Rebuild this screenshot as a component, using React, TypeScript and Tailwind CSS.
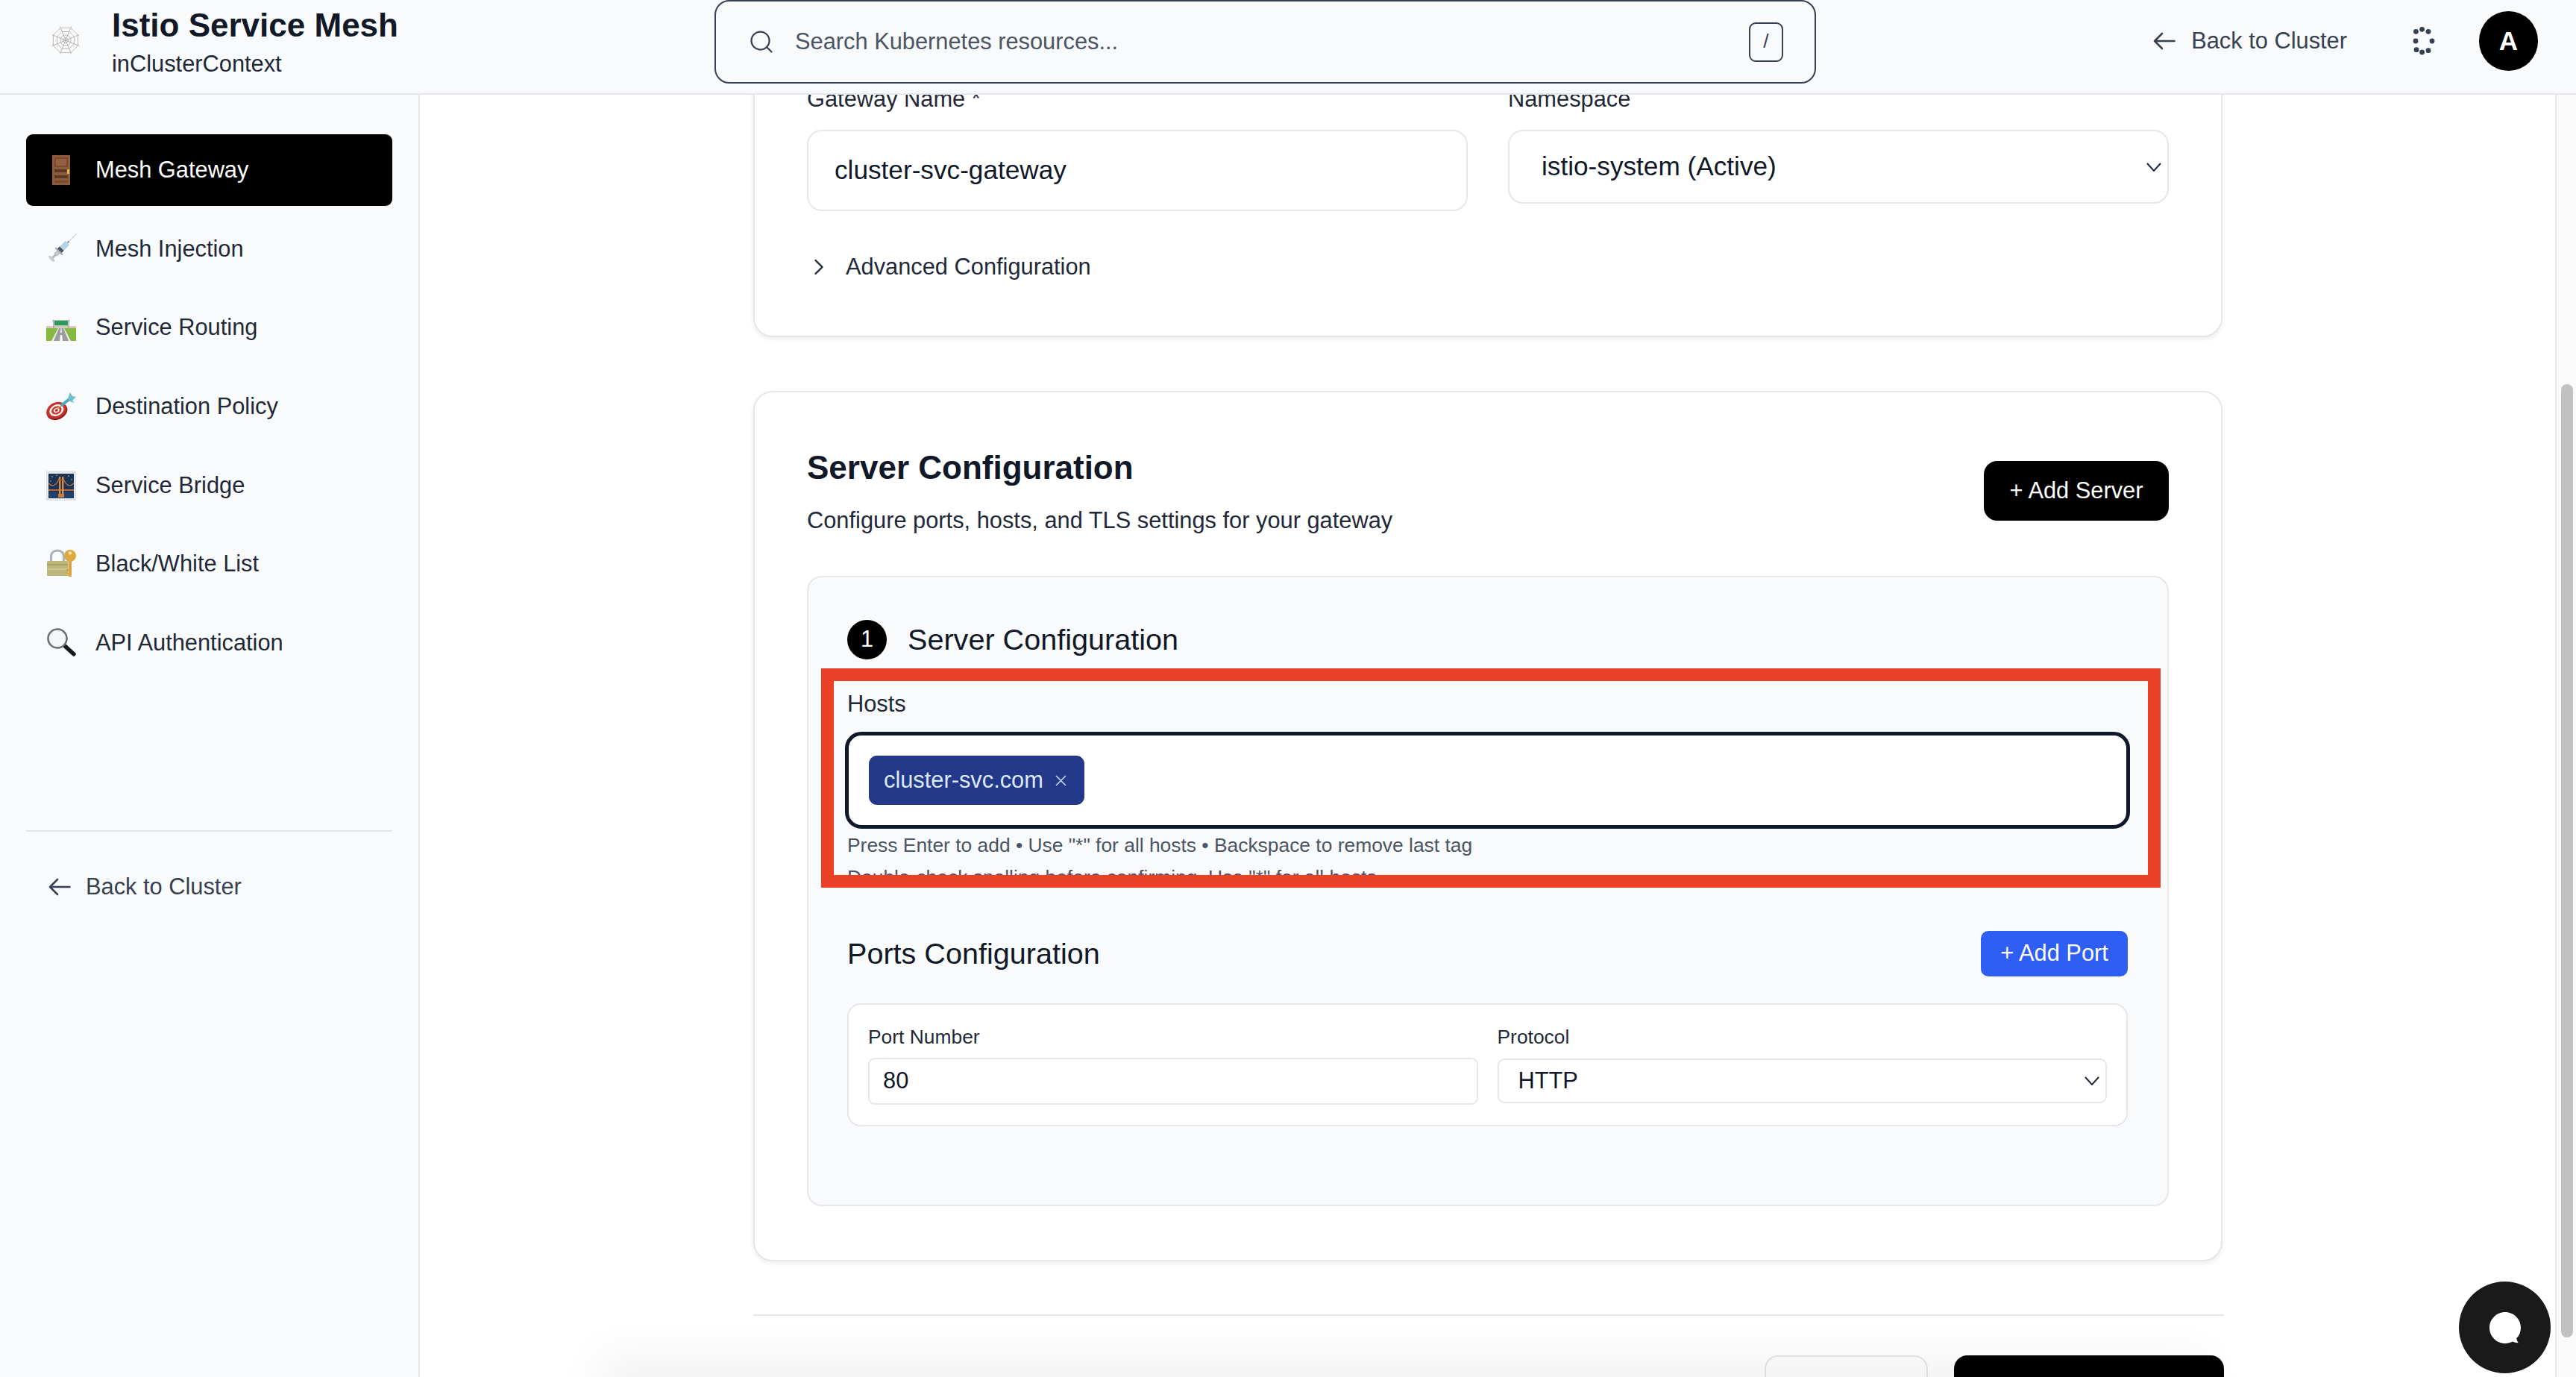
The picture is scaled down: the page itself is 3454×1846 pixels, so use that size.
import { ChevronRight, Search } from "lucide-react";

const Chevron = () => (
  <svg width="20" height="12" viewBox="0 0 20 12" fill="none" stroke="#1f2937" strokeWidth="2" className="shrink-0">
    <path d="M1 1l9 10 9-10" />
  </svg>
);

const BackArrow = () => (
  <svg width="30" height="24" viewBox="0 0 30 24" fill="none" stroke="#374151" strokeWidth="2.6" strokeLinecap="round" strokeLinejoin="round" className="shrink-0">
    <path d="M28.5 12H2M12 2 2 12l10 10" />
  </svg>
);

const WebLogo = () => {
  const spokes = [0, 45, 90, 135, 180, 225, 270, 315];
  const ring = (r: number) =>
    spokes
      .map((a, i) => {
        const rad = ((a + 22.5) * Math.PI) / 180;
        return `${i === 0 ? "M" : "L"}${(20 + Math.cos(rad) * r).toFixed(1)} ${(20 + Math.sin(rad) * r).toFixed(1)}`;
      })
      .join(" ") + "Z";
  return (
    <svg width="40" height="40" viewBox="0 0 40 40" fill="none" stroke="#b0b0b0" strokeWidth="0.9" className="shrink-0">
      {spokes.map((a) => {
        const rad = ((a + 22.5) * Math.PI) / 180;
        return <line key={a} x1="20" y1="20" x2={20 + Math.cos(rad) * 20} y2={20 + Math.sin(rad) * 20} />;
      })}
      <path d={ring(18)} />
      <path d={ring(12.5)} />
      <path d={ring(7.5)} />
      <path d={ring(3.5)} />
    </svg>
  );
};

const DoorIcon = () => (
  <svg width="40" height="40" viewBox="0 0 40 40">
    <rect x="8" y="0" width="24" height="40" fill="#8c5a3c" />
    <rect x="11" y="3" width="18" height="13" fill="#7a4a2e" />
    <rect x="13" y="5" width="14" height="9" fill="#93603f" />
    <rect x="11" y="19" width="18" height="4" fill="#5f3a22" />
    <rect x="11" y="27" width="18" height="4" fill="#5f3a22" />
    <rect x="11" y="34" width="18" height="3" fill="#7a4a2e" />
    <rect x="28" y="19" width="3" height="6" fill="#e5b84a" />
  </svg>
);

const SyringeIcon = () => (
  <svg width="40" height="40" viewBox="0 0 40 40">
    <g transform="rotate(45 20 20)">
      <rect x="19.6" y="-8" width="0.8" height="15" fill="#b4bcc4" />
      <rect x="18.6" y="5" width="2.8" height="3" fill="#9ca3af" />
      <rect x="16" y="8" width="8" height="15" rx="1" fill="#b7d3e6" />
      <rect x="16" y="19" width="8" height="5" fill="#4b5563" />
      <rect x="17" y="24" width="6" height="7" fill="#c3c8cd" />
      <rect x="13" y="23" width="14" height="2.4" rx="1" fill="#a8aeb4" />
      <rect x="18.5" y="30" width="3" height="8" fill="#b4b9bf" />
      <ellipse cx="20" cy="38" rx="5.5" ry="2.2" fill="#c9cdd2" />
    </g>
  </svg>
);

const RoadIcon = () => (
  <svg width="40" height="40" viewBox="0 0 40 40">
    <rect x="0" y="18" width="40" height="4" fill="#d6cab8" />
    <rect x="0" y="21" width="40" height="17" fill="#86b93f" />
    <polygon points="17,21 23,21 32,38 8,38" fill="#9a9c9e" />
    <polygon points="19.600,21 20.400,21 21,27 19,27" fill="#f3f4f6" />
    <polygon points="16,21 17,21 10,38 7,38" fill="#eceef0" />
    <polygon points="23,21 24,21 33,38 30,38" fill="#eceef0" />
    <polygon points="18.800,30 21.200,30 22,38 18,38" fill="#f3f4f6" />
    <rect x="9" y="10" width="1.600" height="12" fill="#a8adb2" />
    <rect x="29.400" y="10" width="1.600" height="12" fill="#a8adb2" />
    <rect x="8" y="10" width="24" height="1.400" fill="#b4b9be" />
    <rect x="11" y="11" width="18" height="6.500" fill="#2f9a5b" />
  </svg>
);

const DartIcon = () => (
  <svg width="40" height="40" viewBox="0 0 40 40">
    <g transform="rotate(-25 14 25.500)">
      <ellipse cx="14" cy="26.500" rx="14.500" ry="11" fill="#8f1d1d" />
      <ellipse cx="14" cy="25" rx="14" ry="10.500" fill="#c8312b" />
      <ellipse cx="14" cy="25" rx="10" ry="7.500" fill="#f3f1ee" />
      <ellipse cx="14" cy="25" rx="7" ry="5.200" fill="#c8312b" />
      <ellipse cx="14" cy="25" rx="4.200" ry="3.100" fill="#f3f1ee" />
      <ellipse cx="14" cy="25" rx="2.200" ry="1.700" fill="#c8312b" />
    </g>
    <line x1="15" y1="23" x2="22" y2="17" stroke="#c9a24b" strokeWidth="1.600" />
    <line x1="21" y1="18" x2="31" y2="10" stroke="#4fa9b8" strokeWidth="4" strokeLinecap="round" />
    <polygon points="29,9 32,1 35,6 40,7 35,12 38,15 31,13" fill="#6cc0c9" />
  </svg>
);

const BridgeIcon = () => (
  <svg width="40" height="40" viewBox="0 -3 40 40">
    <rect x="0" y="-2" width="40" height="39" fill="#e5e9ed" stroke="#cfd4d9" strokeWidth="0.8" />
    <rect x="3" y="1" width="34" height="33" fill="#1c3358" />
    <rect x="3" y="26" width="34" height="8" fill="#22406e" />
    <rect x="3" y="22" width="34" height="2" fill="#c0692f" />
    <path d="M3 14 Q 12 22 18 6 M22 6 Q 28 22 37 14" fill="none" stroke="#c97b3a" strokeWidth="1.100" />
    <rect x="17" y="5" width="2.400" height="27" fill="#d98a45" />
    <rect x="21" y="5" width="2.400" height="27" fill="#d98a45" />
    <rect x="17" y="9" width="6" height="1.600" fill="#a85c2a" />
    <rect x="16" y="28" width="8" height="5" fill="#c97b3a" />
    <circle cx="8" cy="5" r="0.8" fill="#f2dc9c" />
    <circle cx="14" cy="3" r="0.7" fill="#f2dc9c" />
    <circle cx="30" cy="4" r="0.8" fill="#f2dc9c" />
    <circle cx="34" cy="9" r="0.7" fill="#f2dc9c" />
    <circle cx="6" cy="11" r="0.7" fill="#f2dc9c" />
  </svg>
);

const LockIcon = () => (
  <svg width="40" height="40" viewBox="0 0 40 40">
    <path d="M6.500 17V10.500C6.500 5 10 2 15 2s8.500 3 8.500 8.500V17" fill="none" stroke="#aab4bd" strokeWidth="3.200" />
    <rect x="1" y="16" width="28" height="20" rx="1.500" fill="#bdb67a" />
    <rect x="1" y="20" width="28" height="2" fill="#a8a164" />
    <rect x="1" y="26" width="28" height="2" fill="#cdc78f" />
    <rect x="29.500" y="13" width="4.500" height="24" fill="#d9a544" />
    <rect x="27" y="27" width="3" height="2.500" fill="#d9a544" />
    <rect x="27" y="32" width="3" height="2.500" fill="#d9a544" />
    <circle cx="32" cy="9" r="8" fill="#dfa941" />
    <circle cx="32" cy="5.500" r="2.200" fill="#f6e3b0" />
  </svg>
);

const MagnifierIcon = () => (
  <svg width="40" height="40" viewBox="0 0 40 40">
    <line x1="25" y1="24" x2="37" y2="35" stroke="#16181b" strokeWidth="5.500" strokeLinecap="round" />
    <circle cx="15" cy="14" r="12.500" fill="#f5f6f7" stroke="#6b7077" strokeWidth="2.600" />
  </svg>
);

const navItems = [
  { label: "Mesh Gateway", icon: <DoorIcon />, active: true },
  { label: "Mesh Injection", icon: <SyringeIcon /> },
  { label: "Service Routing", icon: <RoadIcon /> },
  { label: "Destination Policy", icon: <DartIcon /> },
  { label: "Service Bridge", icon: <BridgeIcon /> },
  { label: "Black/White List", icon: <LockIcon /> },
  { label: "API Authentication", icon: <MagnifierIcon /> },
];

const dots = [
  [-10.6, -12.7],
  [-2.4, -15.7],
  [6, -12.7],
  [-11, 0],
  [11, 0],
  [-10, 11.7],
  [-2.4, 15],
  [6, 12.7],
];

export default function App() {
  return (
    <div className="relative flex h-[1846px] w-[3454px] flex-col overflow-hidden bg-white font-['Liberation_Sans',Arial,sans-serif] text-[#111827]">
      {/* Top bar */}
      <header className="relative z-10 flex h-[127px] shrink-0 items-start border-b-2 border-[#e5e7eb] bg-[#f9fafb]">
        <div className="flex w-[958px] shrink-0 items-start pl-[68px]">
          <div className="mt-[34px]">
            <WebLogo />
          </div>
          <div className="ml-[42px] mt-[6px] flex flex-col">
            <span className="text-[44px] font-bold leading-[56px]">Istio Service Mesh</span>
            <span className="mt-[2px] text-[30.8px] leading-[44px] text-[#1f2937]">inClusterContext</span>
          </div>
        </div>
        <div className="flex h-[112px] w-[1477px] shrink-0 items-center rounded-[20px] border-2 border-[#374151] pl-[43px] pr-[42px]">
          <Search size={36} strokeWidth={1.5} color="#374151" className="shrink-0" />
          <span className="ml-[27px] flex-1 text-[30.8px] text-[#4b5563]">Search Kubernetes resources...</span>
          <span className="flex h-[53px] w-[46px] items-center justify-center rounded-[9px] border-2 border-[#374151] text-[26.4px] text-[#374151]">
            /
          </span>
        </div>
        <div className="flex h-[110px] flex-1 items-center justify-end pr-[51px]">
          <BackArrow />
          <span className="ml-[21px] text-[30.8px] text-[#374151]">Back to Cluster</span>
          <svg width="34" height="40" viewBox="-17 -20 34 40" fill="#374151" className="ml-[86px] shrink-0">
            {dots.map(([x, y], i) => (
              <circle key={i} cx={x} cy={y} r="3.4" />
            ))}
          </svg>
          <div className="ml-[57px] flex h-[80px] w-[79px] items-center justify-center rounded-full bg-black text-[35px] font-bold text-white">
            A
          </div>
        </div>
      </header>

      <div className="flex min-h-0 flex-1">
        {/* Sidebar */}
        <aside className="flex w-[563px] shrink-0 flex-col border-r-2 border-[#e5e7eb] bg-[#f9fafb] px-[35px] pt-[53px]">
          <nav className="flex flex-col gap-[9.7px]">
            {navItems.map((item) => (
              <div
                key={item.label}
                className={
                  item.active
                    ? "flex h-[96px] items-center gap-[26px] rounded-[9px] bg-black pl-[27px] text-[30.8px] text-white"
                    : "flex h-[96px] items-center gap-[26px] rounded-[9px] pl-[27px] text-[30.8px] text-[#1f2937]"
                }
              >
                {item.icon}
                <span>{item.label}</span>
              </div>
            ))}
          </nav>
          <div className="mt-[203px] border-t-2 border-[#e5e7eb]" />
          <div className="mt-[52px] flex h-[44px] items-center gap-[20px] pl-[30px] text-[30.8px] text-[#374151]">
            <BackArrow />
            <span>Back to Cluster</span>
          </div>
        </aside>

        {/* Main */}
        <main className="relative min-w-0 flex-1 overflow-hidden pl-[447px]">
          <div className="w-[1972px]">
            <section className="mt-[-88px] w-[1970px] rounded-[26px] border-2 border-[#e5e7eb] bg-white p-[70px] shadow-[0_3px_6px_rgba(0,0,0,0.07)]">
              <div className="grid grid-cols-2 items-start gap-[54px]">
                <div>
                  <div className="mb-[19px] text-[30.8px] leading-[44px] text-[#1f2937]">Gateway Name *</div>
                  <div className="flex h-[109px] items-center rounded-[20px] border-2 border-[#e5e7eb] pl-[35px] text-[35.2px]">
                    cluster-svc-gateway
                  </div>
                </div>
                <div>
                  <div className="mb-[19px] text-[30.8px] leading-[44px] text-[#1f2937]">Namespace</div>
                  <div className="flex h-[99px] items-center justify-between rounded-[20px] border-2 border-[#e5e7eb] pl-[43px] pr-[8px] text-[35.2px]">
                    <span>istio-system (Active)</span>
                    <Chevron />
                  </div>
                </div>
              </div>
              <div className="mt-[53px] flex h-[44px] items-center text-[30.8px] text-[#1f2937]">
                <ChevronRight size={36} strokeWidth={1.6} className="ml-[-2px] shrink-0" />
                <span className="ml-[18px]">Advanced Configuration</span>
              </div>
            </section>

            <section className="mt-[72px] w-[1970px] rounded-[26px] border-2 border-[#e5e7eb] bg-white px-[70px] pb-[72px] pt-[70px] shadow-[0_3px_6px_rgba(0,0,0,0.07)]">
              <div className="flex items-center justify-between">
                <div>
                  <h2 className="text-[44px] font-bold leading-[62px]">Server Configuration</h2>
                  <p className="mt-[18px] text-[30.8px] leading-[44px] text-[#1f2937]">
                    Configure ports, hosts, and TLS settings for your gateway
                  </p>
                </div>
                <button className="h-[80px] w-[248px] rounded-[18px] bg-black text-[30.8px] text-white">+ Add Server</button>
              </div>

              <div className="relative mt-[52px] h-[845px] rounded-[20px] border-2 border-[#e5e7eb] bg-[#f9fafb] pl-[52px] pr-[53px] pt-[57px]">
                <div className="flex items-center gap-[28px]">
                  <span className="flex h-[53px] w-[53px] items-center justify-center rounded-full bg-black text-[30.8px] text-white">
                    1
                  </span>
                  <h3 className="text-[39.6px] leading-[53px]">Server Configuration</h3>
                </div>

                <div className="mt-[38px] text-[30.8px] leading-[44px] text-[#1f2937]">Hosts</div>
                <div className="mx-[-3px] mt-[15px] flex h-[130px] items-center rounded-[22px] border-[5px] border-[#0f172a] bg-white pl-[27px]">
                  <span className="flex h-[66px] items-center gap-[16px] rounded-[11px] bg-[#24388a] pl-[20px] pr-[24px] text-[30.8px] text-[#dbeafe]">
                    cluster-svc.com
                    <svg width="15" height="15" viewBox="0 0 15 15" fill="none" stroke="#bfdbfe" strokeWidth="1.6">
                      <path d="M1 1l13 13M14 1 1 14" />
                    </svg>
                  </span>
                </div>
                <p className="mt-[5px] text-[26.4px] leading-[35px] text-[#4b5563]">
                  Press Enter to add • Use "*" for all hosts • Backspace to remove last tag
                </p>
                <p className="mt-[8px] text-[26.4px] leading-[35px] text-[#4b5563]">
                  Double-check spelling before confirming. Use "*" for all hosts
                </p>

                <div className="mt-[54px] flex h-[61px] items-center justify-between">
                  <h3 className="text-[39.6px]">Ports Configuration</h3>
                  <button className="h-[61px] w-[197px] rounded-[10px] bg-[#2f5ef5] text-[30.8px] text-white">+ Add Port</button>
                </div>

                <div className="mt-[36px] grid h-[165px] grid-cols-2 gap-[26px] rounded-[18px] border-2 border-[#e5e7eb] bg-white pl-[26px] pr-[26px] pt-[26px]">
                  <div>
                    <div className="mb-[10px] text-[26.4px] leading-[35px] text-[#1f2937]">Port Number</div>
                    <div className="flex h-[63px] items-center rounded-[9px] border-2 border-[#e5e7eb] pl-[18px] text-[30.8px]">80</div>
                  </div>
                  <div>
                    <div className="mb-[11px] text-[26.4px] leading-[35px] text-[#1f2937]">Protocol</div>
                    <div className="flex h-[60px] items-center justify-between rounded-[9px] border-2 border-[#e5e7eb] pl-[26px] pr-[8px] text-[30.8px]">
                      <span>HTTP</span>
                      <Chevron />
                    </div>
                  </div>
                </div>

                {/* Annotation drawn over the hosts field */}
                <div className="absolute left-[17px] top-[122px] h-[294px] w-[1796px] border-[17px] border-[#ea4026]" />
              </div>
            </section>

            <div className="mt-[71px] border-t-2 border-[#e5e7eb]" />
            <div className="mt-[53px] flex justify-end gap-[35px]">
              <button className="h-[96px] w-[219px] rounded-[18px] border-2 border-[#e5e7eb] bg-white" />
              <button className="h-[96px] w-[362px] rounded-[18px] bg-black" />
            </div>
          </div>

          <div className="absolute left-[270px] right-[500px] top-full h-[40px] shadow-[0_0_60px_30px_rgba(0,0,0,0.05)]" />
        </main>

        {/* Scrollbar */}
        <div className="w-[28px] shrink-0 border-l-2 border-[#e5e7eb] bg-[#fafafa] pl-[6px] pt-[388px]">
          <div className="h-[1278px] w-[16px] rounded-full bg-[#c1c1c1]" />
        </div>
      </div>

      {/* Chat launcher */}
      <div className="absolute bottom-[5px] right-[34px] flex h-[123px] w-[123px] items-center justify-center rounded-full bg-[#1a1a1a]">
        <svg width="44" height="44" viewBox="0 0 44 44" fill="white">
          <path d="M22 1C10.400 1 1 10.400 1 22s9.400 21 21 21c3.600 0 7-.9 10-2.500 2.400 1 5 1.600 7.600 1.700-1.200-1.800-2-3.800-2.400-6C41 32.500 43 27.500 43 22 43 10.400 33.600 1 22 1z" />
        </svg>
      </div>
    </div>
  );
}
